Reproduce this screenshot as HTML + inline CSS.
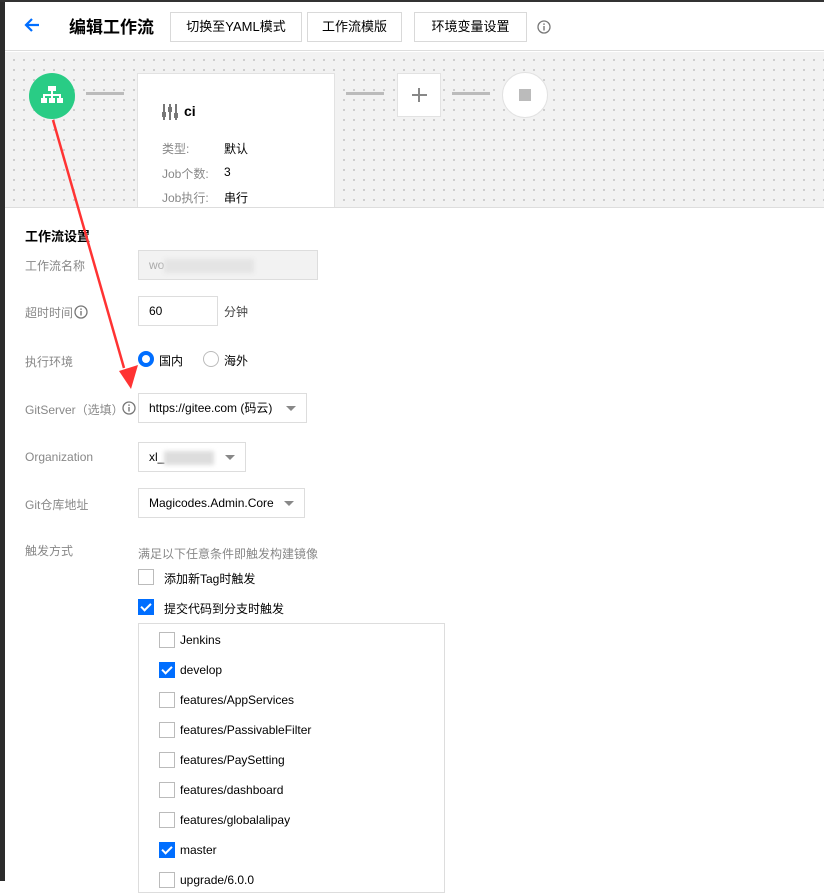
<!DOCTYPE html>
<html><head><meta charset="utf-8">
<style>
*{box-sizing:border-box;margin:0;padding:0}
body{width:824px;height:881px;overflow:hidden;background:#fff;font-family:"Liberation Sans","Noto Sans CJK SC",sans-serif;font-size:12px;color:#000;position:relative}
.strip{position:absolute;left:0;top:0;width:5px;height:881px;background:#2c2c2c}
.topline{position:absolute;left:0;top:0;width:824px;height:2px;background:#333}
.hdr{position:absolute;left:5px;top:2px;right:0;height:49px;background:#fff;border-bottom:1px solid #ddd}
.btn{position:absolute;top:10px;height:30px;border:1px solid #d9d9d9;background:#fff;font-size:13px;line-height:28px;text-align:center;color:#000}
.canvas{position:absolute;left:5px;top:52px;right:0;height:156px;background-color:#f2f2f2;background-image:radial-gradient(circle,#c4c4c4 0.8px,transparent 1.1px);background-size:10px 10px;background-position:4px 3px;border-bottom:1px solid #ddd;overflow:hidden}
.lbl{position:absolute;left:25px;color:#888;font-size:12px}
.inp{position:absolute;border:1px solid #ddd;background:#fff;height:30px;font-size:12px;line-height:28px;padding-left:10px}
.tri{position:absolute;right:10px;top:12px;width:0;height:0;border-left:5px solid transparent;border-right:5px solid transparent;border-top:5px solid #888}
.cb{position:absolute;width:16px;height:16px;border:1px solid #bbb;background:#fff}
.cb.on{background:#006eff;border-color:#006eff}
.cb.on:after{content:"";position:absolute;left:4px;top:1px;width:4px;height:8px;border:solid #fff;border-width:0 2px 2px 0;transform:rotate(45deg)}
.t{position:absolute;font-size:12px;color:#000}
</style></head><body>
<div class="topline"></div>
<div class="hdr">
  <svg style="position:absolute;left:19px;top:15px" width="16" height="16" viewBox="0 0 16 16"><path d="M15 8H2M8 2L2 8l6 6" stroke="#006eff" stroke-width="2.2" fill="none"/></svg>
  <div style="position:absolute;left:64px;top:11px;font-size:17px;font-weight:bold">编辑工作流</div>
  <div class="btn" style="left:165px;width:132px">切换至YAML模式</div>
  <div class="btn" style="left:302px;width:95px">工作流模版</div>
  <div class="btn" style="left:409px;width:113px">环境变量设置</div>
  <svg style="position:absolute;left:532px;top:18px" width="14" height="14" viewBox="0 0 14 14"><circle cx="7" cy="7" r="6" stroke="#777" stroke-width="1.3" fill="none"/><rect x="6.3" y="6" width="1.4" height="4.5" fill="#777"/><rect x="6.3" y="3.4" width="1.4" height="1.5" fill="#777"/></svg>
</div>
<div class="canvas">
  <div style="position:absolute;left:24px;top:21px;width:46px;height:46px;border-radius:50%;background:#29cc85"></div>
  <svg style="position:absolute;left:36px;top:34px" width="22" height="20" viewBox="0 0 22 20"><rect x="7" y="0" width="8" height="5" fill="#fff"/><rect x="10" y="5" width="2" height="4" fill="#fff"/><rect x="2" y="8" width="18" height="2" fill="#fff"/><rect x="2" y="9" width="2" height="3" fill="#fff"/><rect x="10" y="9" width="2" height="3" fill="#fff"/><rect x="18" y="9" width="2" height="3" fill="#fff"/><rect x="0" y="12" width="6" height="5" fill="#fff"/><rect x="8" y="12" width="6" height="5" fill="#fff"/><rect x="16" y="12" width="6" height="5" fill="#fff"/></svg>
  <div style="position:absolute;left:81px;top:40px;width:38px;height:3px;background:#bbb"></div>
  <div style="position:absolute;left:132px;top:21px;width:198px;height:150px;background:#fff;border:1px solid #e2e2e2"></div>
  <svg style="position:absolute;left:157px;top:52px" width="16" height="16" viewBox="0 0 16 16"><g fill="#777"><rect x="1" y="0" width="2" height="16"/><rect x="0" y="8" width="4" height="5"/><rect x="7" y="0" width="2" height="16"/><rect x="6" y="3" width="4" height="5"/><rect x="13" y="0" width="2" height="16"/><rect x="12" y="9" width="4" height="5"/></g></svg>
  <div class="t" style="left:179px;top:51px;font-size:14px;font-weight:bold">ci</div>
  <div class="t" style="left:157px;top:88px;color:#888">类型:</div><div class="t" style="left:219px;top:88px">默认</div>
  <div class="t" style="left:157px;top:113px;color:#888">Job个数:</div><div class="t" style="left:219px;top:113px">3</div>
  <div class="t" style="left:157px;top:137px;color:#888">Job执行:</div><div class="t" style="left:219px;top:137px">串行</div>
  <div style="position:absolute;left:341px;top:40px;width:38px;height:3px;background:#bbb"></div>
  <div style="position:absolute;left:392px;top:21px;width:44px;height:44px;background:#fff;border:1px solid #e2e2e2"></div>
  <div style="position:absolute;left:407px;top:42px;width:15px;height:2px;background:#888"></div>
  <div style="position:absolute;left:413px;top:36px;width:2px;height:14px;background:#888"></div>
  <div style="position:absolute;left:447px;top:40px;width:38px;height:3px;background:#bbb"></div>
  <div style="position:absolute;left:497px;top:20px;width:46px;height:46px;border-radius:50%;background:#fff;border:1px solid #e2e2e2"></div>
  <div style="position:absolute;left:514px;top:37px;width:12px;height:12px;background:#bbb"></div>
</div>

<div class="t" style="left:25px;top:226px;font-size:13px;font-weight:bold">工作流设置</div>
<div class="lbl" style="top:257px">工作流名称</div>
<div class="inp" style="left:138px;top:250px;width:180px;background:#f2f2f2;color:#aaa">wo<span style="display:inline-block;width:90px;height:14px;background:#e4e4e4;vertical-align:middle;filter:blur(2px)"></span></div>

<div class="lbl" style="top:304px">超时时间</div>
<svg style="position:absolute;left:74px;top:305px" width="14" height="14" viewBox="0 0 14 14"><circle cx="7" cy="7" r="6" stroke="#777" stroke-width="1.3" fill="none"/><rect x="6.3" y="6" width="1.4" height="4.5" fill="#777"/><rect x="6.3" y="3.4" width="1.4" height="1.5" fill="#777"/></svg>
<div class="inp" style="left:138px;top:296px;width:80px">60</div>
<div class="t" style="left:224px;top:303px;color:#444">分钟</div>

<div class="lbl" style="top:353px">执行环境</div>
<div style="position:absolute;left:138px;top:351px;width:16px;height:16px;border-radius:50%;border:4px solid #006eff;background:#fff"></div>
<div class="t" style="left:159px;top:352px">国内</div>
<div style="position:absolute;left:203px;top:351px;width:16px;height:16px;border-radius:50%;border:1px solid #bbb;background:#fff"></div>
<div class="t" style="left:224px;top:352px">海外</div>

<div class="lbl" style="top:401px">GitServer（选填）</div>
<svg style="position:absolute;left:122px;top:401px" width="14" height="14" viewBox="0 0 14 14"><circle cx="7" cy="7" r="6" stroke="#777" stroke-width="1.3" fill="none"/><rect x="6.3" y="6" width="1.4" height="4.5" fill="#777"/><rect x="6.3" y="3.4" width="1.4" height="1.5" fill="#777"/></svg>
<div class="inp" style="left:138px;top:393px;width:169px">https://gitee.com (码云)<div class="tri"></div></div>

<div class="lbl" style="top:450px">Organization</div>
<div class="inp" style="left:138px;top:442px;width:108px">xl_<span style="display:inline-block;width:50px;height:14px;background:#ddd;vertical-align:middle;filter:blur(2px)"></span><div class="tri"></div></div>

<div class="lbl" style="top:496px">Git仓库地址</div>
<div class="inp" style="left:138px;top:488px;width:167px">Magicodes.Admin.Core<div class="tri"></div></div>

<div class="lbl" style="top:542px">触发方式</div>
<div class="t" style="left:138px;top:545px;color:#888">满足以下任意条件即触发构建镜像</div>
<div class="cb" style="left:138px;top:569px"></div><div class="t" style="left:164px;top:570px">添加新Tag时触发</div>
<div class="cb on" style="left:138px;top:599px"></div><div class="t" style="left:164px;top:600px">提交代码到分支时触发</div>

<div style="position:absolute;left:138px;top:623px;width:307px;height:270px;border:1px solid #ddd"></div>
<div class="cb" style="left:159px;top:632px"></div><div class="t" style="left:180px;top:633px">Jenkins</div>
<div class="cb on" style="left:159px;top:662px"></div><div class="t" style="left:180px;top:663px">develop</div>
<div class="cb" style="left:159px;top:692px"></div><div class="t" style="left:180px;top:693px">features/AppServices</div>
<div class="cb" style="left:159px;top:722px"></div><div class="t" style="left:180px;top:723px">features/PassivableFilter</div>
<div class="cb" style="left:159px;top:752px"></div><div class="t" style="left:180px;top:753px">features/PaySetting</div>
<div class="cb" style="left:159px;top:782px"></div><div class="t" style="left:180px;top:783px">features/dashboard</div>
<div class="cb" style="left:159px;top:812px"></div><div class="t" style="left:180px;top:813px">features/globalalipay</div>
<div class="cb on" style="left:159px;top:842px"></div><div class="t" style="left:180px;top:843px">master</div>
<div class="cb" style="left:159px;top:872px"></div><div class="t" style="left:180px;top:873px">upgrade/6.0.0</div>

<svg style="position:absolute;left:0;top:0" width="824" height="881"><path d="M53 120 L124 368" stroke="#f33" stroke-width="2.5" fill="none"/><path d="M119 371 L138 365 L131 389 Z" fill="#f33"/></svg>
<div class="strip"></div>
<div class="topline"></div>
</body></html>
